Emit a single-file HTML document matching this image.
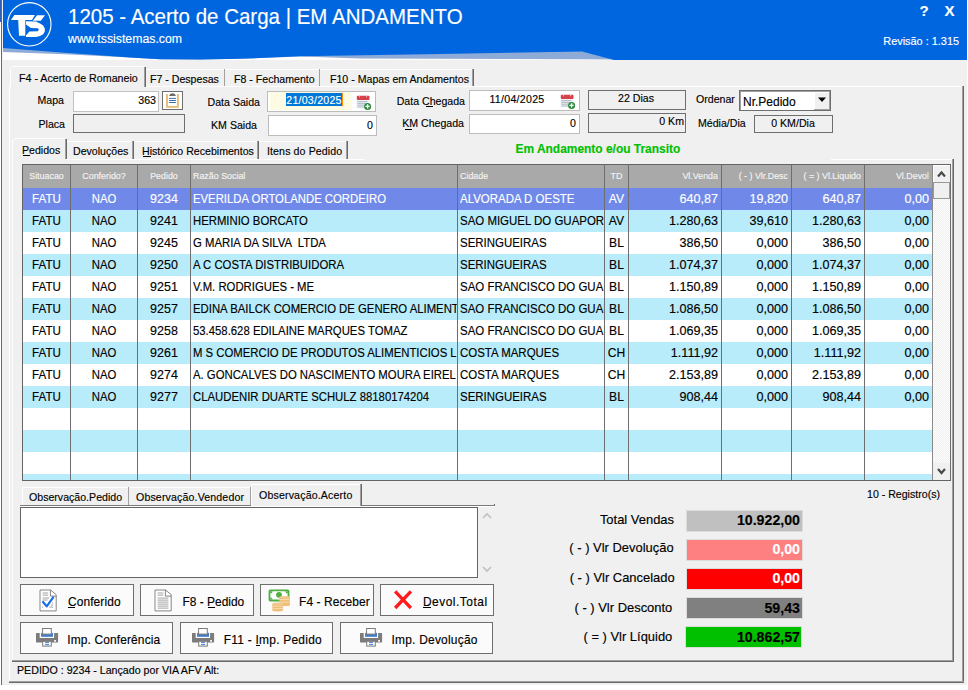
<!DOCTYPE html><html><head><meta charset="utf-8"><style>
html,body{margin:0;padding:0;}
body{width:968px;height:690px;position:relative;overflow:hidden;background:#ffffff;font-family:"Liberation Sans", sans-serif;}
.a{position:absolute;}
.t{position:absolute;white-space:pre;-webkit-text-stroke:0.15px currentColor;}
svg{position:absolute;}
</style></head><body>
<div class="a" style="left:2px;top:0px;width:965px;height:685px;background:#f0f0f0;"></div>
<div class="a" style="left:1px;top:0px;width:1px;height:685px;background:#6a6a6a;"></div>
<div class="a" style="left:0px;top:0px;width:1px;height:22px;background:#2c5fb5;"></div>
<svg class="a" style="left:0;top:0" width="968" height="62" viewBox="0 0 968 62">
<polygon fill="#ffffff" points="3,44 967,44 967,60 3,60"/>
<polygon fill="#8eaad6" points="3,0 614,0 614,59.6 582,59.3 360,58.5 300,56.5 240,58.8 200,59.5 160,59.3 130,57.4 65,54.2 3,52"/>
<polygon fill="#0066e0" points="3,0 967,0 967,60 614,60 582,51.5 440,54 300,56.3 240,58.8 200,59.5 160,59.3 130,57.4 65,52.7 3,48"/>
<polygon fill="#f0f0f0" points="614,60 967,60 967,62 614,62"/>
</svg>
<svg class="a" style="left:0;top:0" width="60" height="50" viewBox="0 0 60 50">
<circle cx="29.3" cy="24.3" r="21.7" fill="none" stroke="#ffffff" stroke-width="1.1"/>
<polygon fill="#ffffff" points="14.3,15 34.9,15 32,19.9 25.3,19.9 25.3,35.8 19,35.8 18.2,19.9 11,19.9"/>
<polygon fill="#ffffff" points="37,15.2 45,15.2 40.8,20.8 32.9,20.8"/>
<polygon fill="#ffffff" points="26,21.2 36,21.5 40,23.5 43.2,25.5 44.8,28.5 44.8,31.5 43.2,34.2 40,36 36,36.9 26,36.9 26,35.5 29.4,31.4 37.8,31.2 38.9,29.5 37.8,28.2 30.9,27.9 26,24.5"/>
</svg>
<div class="t" style="top:6px;font-size:21.58px;line-height:21.58px;color:#ffffff;left:68px;transform:scaleX(0.95);transform-origin:0 0;">1205 - Acerto de Carga | EM ANDAMENTO</div>
<div class="t" style="top:32px;font-size:13.23px;line-height:13.23px;color:#ffffff;left:68px;transform:scaleX(0.93);transform-origin:0 0;">www.tssistemas.com</div>
<div class="t" style="top:3px;font-size:15px;line-height:15px;color:#ffffff;font-weight:bold;left:328.6px;width:600px;text-align:right;">?</div>
<div class="t" style="top:3px;font-size:15px;line-height:15px;color:#ffffff;font-weight:bold;left:354.5px;width:600px;text-align:right;">X</div>
<div class="t" style="top:36px;font-size:11.41px;line-height:11.41px;color:#ffffff;left:358.70000000000005px;width:600px;text-align:right;transform:scaleX(0.955);transform-origin:100% 0;">Revisão : 1.315</div>
<div class="a" style="left:9px;top:86px;width:955px;height:597px;background:#f0f0f0;"></div>
<div class="a" style="left:9px;top:86px;width:955px;height:1px;background:#ffffff;"></div>
<div class="a" style="left:9px;top:86px;width:1px;height:597px;background:#ffffff;"></div>
<div class="a" style="left:962px;top:86px;width:1px;height:597px;background:#a0a0a0;"></div>
<div class="a" style="left:963px;top:86px;width:1px;height:597px;background:#696969;"></div>
<div class="a" style="left:9px;top:681px;width:955px;height:1px;background:#a0a0a0;"></div>
<div class="a" style="left:9px;top:682px;width:955px;height:1px;background:#696969;"></div>
<div class="a" style="left:145px;top:69px;width:80px;height:17px;background:#f0f0f0;"></div>
<div class="a" style="left:145px;top:69px;width:80px;height:1px;background:#ffffff;"></div>
<div class="a" style="left:224px;top:69px;width:1px;height:17px;background:#a0a0a0;"></div>
<div class="a" style="left:225px;top:69px;width:1px;height:17px;background:#696969;"></div>
<div class="a" style="left:225px;top:69px;width:95px;height:17px;background:#f0f0f0;"></div>
<div class="a" style="left:225px;top:69px;width:95px;height:1px;background:#ffffff;"></div>
<div class="a" style="left:319px;top:69px;width:1px;height:17px;background:#a0a0a0;"></div>
<div class="a" style="left:320px;top:69px;width:1px;height:17px;background:#696969;"></div>
<div class="a" style="left:320px;top:69px;width:153px;height:17px;background:#f0f0f0;"></div>
<div class="a" style="left:320px;top:69px;width:153px;height:1px;background:#ffffff;"></div>
<div class="a" style="left:472px;top:69px;width:1px;height:17px;background:#a0a0a0;"></div>
<div class="a" style="left:473px;top:69px;width:1px;height:17px;background:#696969;"></div>
<div class="a" style="left:10px;top:66px;width:135px;height:21px;background:#f0f0f0;"></div>
<div class="a" style="left:12px;top:66px;width:132px;height:1px;background:#ffffff;"></div>
<div class="a" style="left:10px;top:68px;width:1px;height:19px;background:#ffffff;"></div>
<div class="a" style="left:11px;top:67px;width:1px;height:1px;background:#ffffff;"></div>
<div class="a" style="left:144px;top:67px;width:1px;height:20px;background:#a0a0a0;"></div>
<div class="a" style="left:145px;top:67px;width:1px;height:20px;background:#696969;"></div>
<div class="t" style="top:73px;font-size:11.2px;line-height:11.2px;color:#000;left:19px;transform:scaleX(0.955);transform-origin:0 0;">F4 - Acerto de Romaneio</div>
<div class="t" style="top:74px;font-size:11.1px;line-height:11.1px;color:#000;left:150px;transform:scaleX(0.955);transform-origin:0 0;">F7 - Despesas</div>
<div class="t" style="top:74px;font-size:11.1px;line-height:11.1px;color:#000;left:234px;transform:scaleX(0.955);transform-origin:0 0;">F8 - Fechamento</div>
<div class="t" style="top:74px;font-size:11.1px;line-height:11.1px;color:#000;left:329.5px;transform:scaleX(0.955);transform-origin:0 0;">F10 - Mapas em Andamentos</div>
<div class="t" style="top:95px;font-size:11.1px;line-height:11.1px;color:#000;left:-535.9px;width:600px;text-align:right;transform:scaleX(0.955);transform-origin:100% 0;">Mapa</div>
<div class="t" style="top:119px;font-size:11.1px;line-height:11.1px;color:#000;left:-534.9px;width:600px;text-align:right;transform:scaleX(0.955);transform-origin:100% 0;">Placa</div>
<div class="a" style="left:73px;top:91px;width:86px;height:21px;background:#ffffff;border:1px solid #c2c2c2;box-sizing:border-box;"></div>
<div class="t" style="top:95px;font-size:11.1px;line-height:11.1px;color:#000;left:-444.5px;width:600px;text-align:right;transform:scaleX(0.955);transform-origin:100% 0;">363</div>
<div class="a" style="left:162px;top:91px;width:21px;height:19px;background:#ffffff;border:1px solid #6e6e6e;box-sizing:border-box;"></div>
<svg class="a" style="left:160px;top:89px" width="26" height="24" viewBox="0 0 26 24">
<path d="M7 5 V17.9 H17.9 V5" fill="none" stroke="#e8bb70" stroke-width="1.9"/>
<path d="M9 6.9 L10.2 5 Q12.5 3.4 14.8 5 L16 6.9 Z" fill="#6b6b6b"/>
<path d="M9.3 9.4h6.4M9.3 11.5h6.4M9.3 13.5h6.4" stroke="#3c74b8" stroke-width="1" stroke-linecap="round"/>
</svg>
<div class="a" style="left:73px;top:114px;width:112px;height:19px;background:#f0f0f0;border:1px solid #6e6e6e;box-sizing:border-box;"></div>
<div class="t" style="top:97px;font-size:11.1px;line-height:11.1px;color:#000;left:-340px;width:600px;text-align:right;transform:scaleX(0.955);transform-origin:100% 0;">Data Saida</div>
<div class="t" style="top:120px;font-size:11.1px;line-height:11.1px;color:#000;left:-343px;width:600px;text-align:right;transform:scaleX(0.955);transform-origin:100% 0;">KM Saida</div>
<div class="a" style="left:267px;top:91px;width:109px;height:21px;background:#ffffff;border:1px solid #bcbcbc;box-sizing:border-box;"></div>
<div class="a" style="left:270px;top:92px;width:82px;height:18px;background:#fdfbe3;"></div>
<div class="a" style="left:286px;top:93px;width:56px;height:13px;background:#0078d7;"></div>
<div class="a" style="left:342px;top:93px;width:1px;height:13px;background:#ff8c00;"></div>
<div class="t" style="top:95px;font-size:11.1px;line-height:11.1px;color:#ffffff;left:14px;width:600px;text-align:center;transform:scaleX(0.955);transform-origin:50% 0;letter-spacing:0.25px">21/03/2025</div>
<svg class="a" style="left:352px;top:91px" width="24" height="22" viewBox="0 0 24 22">
<rect x="4.8" y="9" width="12" height="8" fill="#f2f4f7"/>
<path d="M5.4 10.6h10M5.4 12.4h10M5.4 14.2h10M5.4 16h10" stroke="#a3b2c0" stroke-width="0.9"/>
<path d="M5.4 9.5v7M8.4 9.5v7M11.4 9.5v7" stroke="#c9d2da" stroke-width="0.6"/>
<rect x="4.8" y="4.8" width="12.7" height="4.2" rx="1" fill="#d7424a"/>
<path d="M7.5 4.8v1.5M14.5 4.8v1.5" stroke="#f3b0b0" stroke-width="1"/>
<circle cx="15.6" cy="15.4" r="3.5" fill="#2c8a3d"/>
<path d="M15.6 13.3v4.2M13.5 15.4h4.2" stroke="#ffffff" stroke-width="1.4"/>
</svg>
<div class="a" style="left:268px;top:115px;width:109px;height:21px;background:#ffffff;border:1px solid #bcbcbc;box-sizing:border-box;"></div>
<div class="t" style="top:120px;font-size:11.1px;line-height:11.1px;color:#000;left:-227px;width:600px;text-align:right;transform:scaleX(0.955);transform-origin:100% 0;">0</div>
<div class="t" style="top:96px;font-size:11.1px;line-height:11.1px;color:#000;left:-135.3px;width:600px;text-align:right;transform:scaleX(0.955);transform-origin:100% 0;">Data Chegada</div>
<div class="a" style="left:425.5px;top:105.5px;width:7px;height:1px;background:#000000;"></div>
<div class="t" style="top:118px;font-size:11.1px;line-height:11.1px;color:#000;left:-136px;width:600px;text-align:right;transform:scaleX(0.955);transform-origin:100% 0;">KM Chegada</div>
<div class="a" style="left:404.5px;top:128.5px;width:7px;height:1px;background:#000000;"></div>
<div class="a" style="left:469px;top:90px;width:111px;height:21px;background:#ffffff;border:1px solid #bcbcbc;box-sizing:border-box;"></div>
<div class="t" style="top:94px;font-size:11.1px;line-height:11.1px;color:#000;left:217px;width:600px;text-align:center;transform:scaleX(0.955);transform-origin:50% 0;letter-spacing:0.3px">11/04/2025</div>
<svg class="a" style="left:556px;top:90px" width="24" height="22" viewBox="0 0 24 22">
<rect x="4.8" y="9" width="12" height="8" fill="#f2f4f7"/>
<path d="M5.4 10.6h10M5.4 12.4h10M5.4 14.2h10M5.4 16h10" stroke="#a3b2c0" stroke-width="0.9"/>
<path d="M5.4 9.5v7M8.4 9.5v7M11.4 9.5v7" stroke="#c9d2da" stroke-width="0.6"/>
<rect x="4.8" y="4.8" width="12.7" height="4.2" rx="1" fill="#d7424a"/>
<path d="M7.5 4.8v1.5M14.5 4.8v1.5" stroke="#f3b0b0" stroke-width="1"/>
<circle cx="15.6" cy="15.4" r="3.5" fill="#2c8a3d"/>
<path d="M15.6 13.3v4.2M13.5 15.4h4.2" stroke="#ffffff" stroke-width="1.4"/>
</svg>
<div class="a" style="left:469px;top:114px;width:111px;height:20px;background:#ffffff;border:1px solid #bcbcbc;box-sizing:border-box;"></div>
<div class="t" style="top:118px;font-size:11.1px;line-height:11.1px;color:#000;left:-24px;width:600px;text-align:right;transform:scaleX(0.955);transform-origin:100% 0;">0</div>
<div class="a" style="left:588px;top:90px;width:98px;height:20px;background:#f0f0f0;border:1px solid #6e6e6e;box-sizing:border-box;"></div>
<div class="t" style="top:93px;font-size:11.1px;line-height:11.1px;color:#000;left:336px;width:600px;text-align:center;transform:scaleX(0.955);transform-origin:50% 0;">22 Dias</div>
<div class="a" style="left:588px;top:113px;width:98px;height:20px;background:#f0f0f0;border:1px solid #6e6e6e;box-sizing:border-box;"></div>
<div class="t" style="top:116px;font-size:11.1px;line-height:11.1px;color:#000;left:84px;width:600px;text-align:right;transform:scaleX(0.955);transform-origin:100% 0;">0 Km</div>
<div class="t" style="top:94px;font-size:11.1px;line-height:11.1px;color:#000;left:695.5px;transform:scaleX(0.955);transform-origin:0 0;">Ordenar</div>
<div class="a" style="left:739px;top:90px;width:92px;height:21px;background:#ffffff;border:1px solid #6e6e6e;box-sizing:border-box;"></div>
<div class="a" style="left:740px;top:91px;width:90px;height:1px;background:#a0a0a0;"></div>
<div class="a" style="left:740px;top:91px;width:1px;height:19px;background:#a0a0a0;"></div>
<div class="t" style="top:96px;font-size:12px;line-height:12px;color:#000;left:743px;">Nr.Pedido</div>
<div class="a" style="left:814px;top:92px;width:16px;height:18px;background:#f0f0f0;"></div>
<div class="a" style="left:814px;top:92px;width:16px;height:1px;background:#ffffff;"></div>
<div class="a" style="left:814px;top:92px;width:1px;height:18px;background:#ffffff;"></div>
<div class="a" style="left:829px;top:92px;width:1px;height:18px;background:#a0a0a0;"></div>
<div class="a" style="left:814px;top:109px;width:16px;height:1px;background:#a0a0a0;"></div>
<svg class="a" style="left:817px;top:97px" width="10" height="6" viewBox="0 0 10 6"><polygon points="1,0.5 9,0.5 5,5" fill="#000"/></svg>
<div class="t" style="top:118px;font-size:11.1px;line-height:11.1px;color:#000;left:698.4px;transform:scaleX(0.955);transform-origin:0 0;">Média/Dia</div>
<div class="a" style="left:754px;top:115px;width:79px;height:18px;background:#f0f0f0;border:1px solid #6e6e6e;box-sizing:border-box;"></div>
<div class="t" style="top:118px;font-size:11.1px;line-height:11.1px;color:#000;left:493px;width:600px;text-align:center;transform:scaleX(0.955);transform-origin:50% 0;">0 KM/Dia</div>
<div class="a" style="left:12px;top:159px;width:942px;height:503px;background:#f0f0f0;"></div>
<div class="a" style="left:12px;top:159px;width:941px;height:1px;background:#ffffff;"></div>
<div class="a" style="left:364px;top:159px;width:467px;height:1px;background:#f0f0f0;"></div>
<div class="a" style="left:12px;top:159px;width:1px;height:502px;background:#ffffff;"></div>
<div class="a" style="left:952px;top:159px;width:1px;height:502px;background:#a0a0a0;"></div>
<div class="a" style="left:953px;top:159px;width:1px;height:502px;background:#696969;"></div>
<div class="a" style="left:12px;top:660px;width:941px;height:1px;background:#a0a0a0;"></div>
<div class="a" style="left:12px;top:661px;width:942px;height:1px;background:#696969;"></div>
<div class="a" style="left:67px;top:141px;width:67px;height:18px;background:#f0f0f0;"></div>
<div class="a" style="left:67px;top:141px;width:67px;height:1px;background:#ffffff;"></div>
<div class="a" style="left:132px;top:141px;width:1px;height:18px;background:#a0a0a0;"></div>
<div class="a" style="left:133px;top:141px;width:1px;height:18px;background:#696969;"></div>
<div class="a" style="left:134px;top:141px;width:125px;height:18px;background:#f0f0f0;"></div>
<div class="a" style="left:134px;top:141px;width:125px;height:1px;background:#ffffff;"></div>
<div class="a" style="left:257px;top:141px;width:1px;height:18px;background:#a0a0a0;"></div>
<div class="a" style="left:258px;top:141px;width:1px;height:18px;background:#696969;"></div>
<div class="a" style="left:259px;top:141px;width:89px;height:18px;background:#f0f0f0;"></div>
<div class="a" style="left:259px;top:141px;width:89px;height:1px;background:#ffffff;"></div>
<div class="a" style="left:346px;top:141px;width:1px;height:18px;background:#a0a0a0;"></div>
<div class="a" style="left:347px;top:141px;width:1px;height:18px;background:#696969;"></div>
<div class="a" style="left:13px;top:138px;width:53px;height:22px;background:#f0f0f0;"></div>
<div class="a" style="left:15px;top:138px;width:50px;height:1px;background:#ffffff;"></div>
<div class="a" style="left:12px;top:140px;width:1px;height:20px;background:#ffffff;"></div>
<div class="a" style="left:13px;top:139px;width:1px;height:1px;background:#ffffff;"></div>
<div class="a" style="left:65px;top:139px;width:1px;height:20px;background:#a0a0a0;"></div>
<div class="a" style="left:66px;top:139px;width:1px;height:20px;background:#696969;"></div>
<div class="t" style="top:145px;font-size:11.1px;line-height:11.1px;color:#000;left:22.2px;transform:scaleX(0.955);transform-origin:0 0;">Pedidos</div>
<div class="a" style="left:22.5px;top:155px;width:7px;height:1px;background:#000;"></div>
<div class="t" style="top:146px;font-size:11.1px;line-height:11.1px;color:#000;left:73.3px;transform:scaleX(0.955);transform-origin:0 0;">Devoluções</div>
<div class="t" style="top:146px;font-size:11.1px;line-height:11.1px;color:#000;left:142px;transform:scaleX(0.955);transform-origin:0 0;">Histórico Recebimentos</div>
<div class="a" style="left:142.5px;top:156px;width:8px;height:1px;background:#000;"></div>
<div class="t" style="top:146px;font-size:11.1px;line-height:11.1px;color:#000;left:267px;transform:scaleX(0.955);transform-origin:0 0;letter-spacing:0.12px">Itens do Pedido</div>
<div class="t" style="top:144px;font-size:11.95px;line-height:11.95px;color:#00c000;font-weight:bold;left:515.5px;">Em Andamento e/ou Transito</div>
<div class="a" style="left:22px;top:164px;width:929px;height:317px;background:#ffffff;border:1px solid #646464;box-sizing:border-box;"></div>
<div class="a" style="left:23px;top:165px;width:909px;height:23px;background:#a9a9a9;"></div>
<div class="a" style="left:23px;top:188px;width:909px;height:22px;background:#7089e8;"></div>
<div class="a" style="left:23px;top:210px;width:909px;height:22px;background:#b9ecfb;"></div>
<div class="a" style="left:23px;top:232px;width:909px;height:22px;background:#ffffff;"></div>
<div class="a" style="left:23px;top:254px;width:909px;height:22px;background:#b9ecfb;"></div>
<div class="a" style="left:23px;top:276px;width:909px;height:22px;background:#ffffff;"></div>
<div class="a" style="left:23px;top:298px;width:909px;height:22px;background:#b9ecfb;"></div>
<div class="a" style="left:23px;top:320px;width:909px;height:22px;background:#ffffff;"></div>
<div class="a" style="left:23px;top:342px;width:909px;height:22px;background:#b9ecfb;"></div>
<div class="a" style="left:23px;top:364px;width:909px;height:22px;background:#ffffff;"></div>
<div class="a" style="left:23px;top:386px;width:909px;height:22px;background:#b9ecfb;"></div>
<div class="a" style="left:23px;top:408px;width:909px;height:22px;background:#ffffff;"></div>
<div class="a" style="left:23px;top:430px;width:909px;height:22px;background:#b9ecfb;"></div>
<div class="a" style="left:23px;top:452px;width:909px;height:22px;background:#ffffff;"></div>
<div class="a" style="left:23px;top:474px;width:909px;height:6px;background:#b9ecfb;"></div>
<div class="a" style="left:70px;top:165px;width:1px;height:315px;background:#6e6e6e;"></div>
<div class="a" style="left:137px;top:165px;width:1px;height:315px;background:#6e6e6e;"></div>
<div class="a" style="left:190px;top:165px;width:1px;height:315px;background:#6e6e6e;"></div>
<div class="a" style="left:457px;top:165px;width:1px;height:315px;background:#6e6e6e;"></div>
<div class="a" style="left:604px;top:165px;width:1px;height:315px;background:#6e6e6e;"></div>
<div class="a" style="left:628px;top:165px;width:1px;height:315px;background:#6e6e6e;"></div>
<div class="a" style="left:721px;top:165px;width:1px;height:315px;background:#6e6e6e;"></div>
<div class="a" style="left:791px;top:165px;width:1px;height:315px;background:#6e6e6e;"></div>
<div class="a" style="left:864px;top:165px;width:1px;height:315px;background:#6e6e6e;"></div>
<div class="t" style="left:23px;width:49.47px;text-align:center;transform:scaleX(0.95);transform-origin:0 0;top:172px;font-size:9.35px;line-height:9.35px;color:#f4f4f4;overflow:hidden;">Situacao</div>
<div class="t" style="left:71px;width:69.47px;text-align:center;transform:scaleX(0.95);transform-origin:0 0;top:172px;font-size:9.35px;line-height:9.35px;color:#f4f4f4;overflow:hidden;">Conferido?</div>
<div class="t" style="left:138px;width:54.74px;text-align:center;transform:scaleX(0.95);transform-origin:0 0;top:172px;font-size:9.35px;line-height:9.35px;color:#f4f4f4;overflow:hidden;">Pedido</div>
<div class="t" style="left:193px;width:277.89px;text-align:left;transform:scaleX(0.95);transform-origin:0 0;top:172px;font-size:9.35px;line-height:9.35px;color:#f4f4f4;overflow:hidden;">Razão Social</div>
<div class="t" style="left:460px;width:151.58px;text-align:left;transform:scaleX(0.95);transform-origin:0 0;top:172px;font-size:9.35px;line-height:9.35px;color:#f4f4f4;overflow:hidden;">Cidade</div>
<div class="t" style="left:605px;width:24.21px;text-align:center;transform:scaleX(0.95);transform-origin:0 0;top:172px;font-size:9.35px;line-height:9.35px;color:#f4f4f4;overflow:hidden;">TD</div>
<div class="t" style="left:629px;width:93.68px;text-align:right;transform:scaleX(0.95);transform-origin:0 0;top:172px;font-size:9.35px;line-height:9.35px;color:#f4f4f4;overflow:hidden;">Vl.Venda</div>
<div class="t" style="left:722px;width:69.47px;text-align:right;transform:scaleX(0.95);transform-origin:0 0;top:172px;font-size:9.35px;line-height:9.35px;color:#f4f4f4;overflow:hidden;">( - ) Vlr.Desc</div>
<div class="t" style="left:792px;width:72.63px;text-align:right;transform:scaleX(0.95);transform-origin:0 0;top:172px;font-size:9.35px;line-height:9.35px;color:#f4f4f4;overflow:hidden;">( = ) Vl.Liquido</div>
<div class="t" style="left:865px;width:67.37px;text-align:right;transform:scaleX(0.95);transform-origin:0 0;top:172px;font-size:9.35px;line-height:9.35px;color:#f4f4f4;overflow:hidden;">Vl.Devol</div>
<div class="t" style="left:23px;width:51.09px;text-align:center;transform:scaleX(0.92);transform-origin:0 0;top:193px;font-size:12.6px;line-height:12.6px;color:#ffffff;overflow:hidden;">FATU</div>
<div class="t" style="left:71px;width:73.33px;text-align:center;transform:scaleX(0.9);transform-origin:0 0;top:193px;font-size:12.6px;line-height:12.6px;color:#ffffff;overflow:hidden;">NAO</div>
<div class="t" style="left:138px;width:52.53px;text-align:center;transform:scaleX(0.99);transform-origin:0 0;top:193px;font-size:12.6px;line-height:12.6px;color:#ffffff;overflow:hidden;">9234</div>
<div class="t" style="left:193px;width:293.33px;text-align:left;transform:scaleX(0.9);transform-origin:0 0;top:193px;font-size:12.6px;line-height:12.6px;color:#ffffff;overflow:hidden;">EVERILDA ORTOLANDE CORDEIRO</div>
<div class="t" style="left:460px;width:158.24px;text-align:left;transform:scaleX(0.91);transform-origin:0 0;top:193px;font-size:12.6px;line-height:12.6px;color:#ffffff;overflow:hidden;">ALVORADA D OESTE</div>
<div class="t" style="left:605px;width:23.96px;text-align:center;transform:scaleX(0.96);transform-origin:0 0;top:193px;font-size:12.6px;line-height:12.6px;color:#ffffff;overflow:hidden;">AV</div>
<div class="t" style="left:629px;width:89.00px;text-align:right;top:193px;font-size:12.6px;line-height:12.6px;color:#ffffff;overflow:hidden;">640,87</div>
<div class="t" style="left:722px;width:66.00px;text-align:right;top:193px;font-size:12.6px;line-height:12.6px;color:#ffffff;overflow:hidden;">19,820</div>
<div class="t" style="left:792px;width:69.00px;text-align:right;top:193px;font-size:12.6px;line-height:12.6px;color:#ffffff;overflow:hidden;">640,87</div>
<div class="t" style="left:865px;width:64.00px;text-align:right;top:193px;font-size:12.6px;line-height:12.6px;color:#ffffff;overflow:hidden;">0,00</div>
<div class="t" style="left:23px;width:51.09px;text-align:center;transform:scaleX(0.92);transform-origin:0 0;top:215px;font-size:12.6px;line-height:12.6px;color:#000000;overflow:hidden;">FATU</div>
<div class="t" style="left:71px;width:73.33px;text-align:center;transform:scaleX(0.9);transform-origin:0 0;top:215px;font-size:12.6px;line-height:12.6px;color:#000000;overflow:hidden;">NAO</div>
<div class="t" style="left:138px;width:52.53px;text-align:center;transform:scaleX(0.99);transform-origin:0 0;top:215px;font-size:12.6px;line-height:12.6px;color:#000000;overflow:hidden;">9241</div>
<div class="t" style="left:193px;width:293.33px;text-align:left;transform:scaleX(0.9);transform-origin:0 0;top:215px;font-size:12.6px;line-height:12.6px;color:#000000;overflow:hidden;">HERMINIO BORCATO</div>
<div class="t" style="left:460px;width:158.24px;text-align:left;transform:scaleX(0.91);transform-origin:0 0;top:215px;font-size:12.6px;line-height:12.6px;color:#000000;overflow:hidden;">SAO MIGUEL DO GUAPOR</div>
<div class="t" style="left:605px;width:23.96px;text-align:center;transform:scaleX(0.96);transform-origin:0 0;top:215px;font-size:12.6px;line-height:12.6px;color:#000000;overflow:hidden;">AV</div>
<div class="t" style="left:629px;width:89.00px;text-align:right;top:215px;font-size:12.6px;line-height:12.6px;color:#000000;overflow:hidden;">1.280,63</div>
<div class="t" style="left:722px;width:66.00px;text-align:right;top:215px;font-size:12.6px;line-height:12.6px;color:#000000;overflow:hidden;">39,610</div>
<div class="t" style="left:792px;width:69.00px;text-align:right;top:215px;font-size:12.6px;line-height:12.6px;color:#000000;overflow:hidden;">1.280,63</div>
<div class="t" style="left:865px;width:64.00px;text-align:right;top:215px;font-size:12.6px;line-height:12.6px;color:#000000;overflow:hidden;">0,00</div>
<div class="t" style="left:23px;width:51.09px;text-align:center;transform:scaleX(0.92);transform-origin:0 0;top:237px;font-size:12.6px;line-height:12.6px;color:#000000;overflow:hidden;">FATU</div>
<div class="t" style="left:71px;width:73.33px;text-align:center;transform:scaleX(0.9);transform-origin:0 0;top:237px;font-size:12.6px;line-height:12.6px;color:#000000;overflow:hidden;">NAO</div>
<div class="t" style="left:138px;width:52.53px;text-align:center;transform:scaleX(0.99);transform-origin:0 0;top:237px;font-size:12.6px;line-height:12.6px;color:#000000;overflow:hidden;">9245</div>
<div class="t" style="left:193px;width:293.33px;text-align:left;transform:scaleX(0.9);transform-origin:0 0;top:237px;font-size:12.6px;line-height:12.6px;color:#000000;overflow:hidden;">G MARIA DA SILVA  LTDA</div>
<div class="t" style="left:460px;width:158.24px;text-align:left;transform:scaleX(0.91);transform-origin:0 0;top:237px;font-size:12.6px;line-height:12.6px;color:#000000;overflow:hidden;">SERINGUEIRAS</div>
<div class="t" style="left:605px;width:23.96px;text-align:center;transform:scaleX(0.96);transform-origin:0 0;top:237px;font-size:12.6px;line-height:12.6px;color:#000000;overflow:hidden;">BL</div>
<div class="t" style="left:629px;width:89.00px;text-align:right;top:237px;font-size:12.6px;line-height:12.6px;color:#000000;overflow:hidden;">386,50</div>
<div class="t" style="left:722px;width:66.00px;text-align:right;top:237px;font-size:12.6px;line-height:12.6px;color:#000000;overflow:hidden;">0,000</div>
<div class="t" style="left:792px;width:69.00px;text-align:right;top:237px;font-size:12.6px;line-height:12.6px;color:#000000;overflow:hidden;">386,50</div>
<div class="t" style="left:865px;width:64.00px;text-align:right;top:237px;font-size:12.6px;line-height:12.6px;color:#000000;overflow:hidden;">0,00</div>
<div class="t" style="left:23px;width:51.09px;text-align:center;transform:scaleX(0.92);transform-origin:0 0;top:259px;font-size:12.6px;line-height:12.6px;color:#000000;overflow:hidden;">FATU</div>
<div class="t" style="left:71px;width:73.33px;text-align:center;transform:scaleX(0.9);transform-origin:0 0;top:259px;font-size:12.6px;line-height:12.6px;color:#000000;overflow:hidden;">NAO</div>
<div class="t" style="left:138px;width:52.53px;text-align:center;transform:scaleX(0.99);transform-origin:0 0;top:259px;font-size:12.6px;line-height:12.6px;color:#000000;overflow:hidden;">9250</div>
<div class="t" style="left:193px;width:293.33px;text-align:left;transform:scaleX(0.9);transform-origin:0 0;top:259px;font-size:12.6px;line-height:12.6px;color:#000000;overflow:hidden;">A C COSTA DISTRIBUIDORA</div>
<div class="t" style="left:460px;width:158.24px;text-align:left;transform:scaleX(0.91);transform-origin:0 0;top:259px;font-size:12.6px;line-height:12.6px;color:#000000;overflow:hidden;">SERINGUEIRAS</div>
<div class="t" style="left:605px;width:23.96px;text-align:center;transform:scaleX(0.96);transform-origin:0 0;top:259px;font-size:12.6px;line-height:12.6px;color:#000000;overflow:hidden;">BL</div>
<div class="t" style="left:629px;width:89.00px;text-align:right;top:259px;font-size:12.6px;line-height:12.6px;color:#000000;overflow:hidden;">1.074,37</div>
<div class="t" style="left:722px;width:66.00px;text-align:right;top:259px;font-size:12.6px;line-height:12.6px;color:#000000;overflow:hidden;">0,000</div>
<div class="t" style="left:792px;width:69.00px;text-align:right;top:259px;font-size:12.6px;line-height:12.6px;color:#000000;overflow:hidden;">1.074,37</div>
<div class="t" style="left:865px;width:64.00px;text-align:right;top:259px;font-size:12.6px;line-height:12.6px;color:#000000;overflow:hidden;">0,00</div>
<div class="t" style="left:23px;width:51.09px;text-align:center;transform:scaleX(0.92);transform-origin:0 0;top:281px;font-size:12.6px;line-height:12.6px;color:#000000;overflow:hidden;">FATU</div>
<div class="t" style="left:71px;width:73.33px;text-align:center;transform:scaleX(0.9);transform-origin:0 0;top:281px;font-size:12.6px;line-height:12.6px;color:#000000;overflow:hidden;">NAO</div>
<div class="t" style="left:138px;width:52.53px;text-align:center;transform:scaleX(0.99);transform-origin:0 0;top:281px;font-size:12.6px;line-height:12.6px;color:#000000;overflow:hidden;">9251</div>
<div class="t" style="left:193px;width:293.33px;text-align:left;transform:scaleX(0.9);transform-origin:0 0;top:281px;font-size:12.6px;line-height:12.6px;color:#000000;overflow:hidden;">V.M. RODRIGUES - ME</div>
<div class="t" style="left:460px;width:158.24px;text-align:left;transform:scaleX(0.91);transform-origin:0 0;top:281px;font-size:12.6px;line-height:12.6px;color:#000000;overflow:hidden;">SAO FRANCISCO DO GUAI</div>
<div class="t" style="left:605px;width:23.96px;text-align:center;transform:scaleX(0.96);transform-origin:0 0;top:281px;font-size:12.6px;line-height:12.6px;color:#000000;overflow:hidden;">BL</div>
<div class="t" style="left:629px;width:89.00px;text-align:right;top:281px;font-size:12.6px;line-height:12.6px;color:#000000;overflow:hidden;">1.150,89</div>
<div class="t" style="left:722px;width:66.00px;text-align:right;top:281px;font-size:12.6px;line-height:12.6px;color:#000000;overflow:hidden;">0,000</div>
<div class="t" style="left:792px;width:69.00px;text-align:right;top:281px;font-size:12.6px;line-height:12.6px;color:#000000;overflow:hidden;">1.150,89</div>
<div class="t" style="left:865px;width:64.00px;text-align:right;top:281px;font-size:12.6px;line-height:12.6px;color:#000000;overflow:hidden;">0,00</div>
<div class="t" style="left:23px;width:51.09px;text-align:center;transform:scaleX(0.92);transform-origin:0 0;top:303px;font-size:12.6px;line-height:12.6px;color:#000000;overflow:hidden;">FATU</div>
<div class="t" style="left:71px;width:73.33px;text-align:center;transform:scaleX(0.9);transform-origin:0 0;top:303px;font-size:12.6px;line-height:12.6px;color:#000000;overflow:hidden;">NAO</div>
<div class="t" style="left:138px;width:52.53px;text-align:center;transform:scaleX(0.99);transform-origin:0 0;top:303px;font-size:12.6px;line-height:12.6px;color:#000000;overflow:hidden;">9257</div>
<div class="t" style="left:193px;width:293.33px;text-align:left;transform:scaleX(0.9);transform-origin:0 0;top:303px;font-size:12.6px;line-height:12.6px;color:#000000;overflow:hidden;">EDINA BAILCK COMERCIO DE GENERO ALIMENT</div>
<div class="t" style="left:460px;width:158.24px;text-align:left;transform:scaleX(0.91);transform-origin:0 0;top:303px;font-size:12.6px;line-height:12.6px;color:#000000;overflow:hidden;">SAO FRANCISCO DO GUAI</div>
<div class="t" style="left:605px;width:23.96px;text-align:center;transform:scaleX(0.96);transform-origin:0 0;top:303px;font-size:12.6px;line-height:12.6px;color:#000000;overflow:hidden;">BL</div>
<div class="t" style="left:629px;width:89.00px;text-align:right;top:303px;font-size:12.6px;line-height:12.6px;color:#000000;overflow:hidden;">1.086,50</div>
<div class="t" style="left:722px;width:66.00px;text-align:right;top:303px;font-size:12.6px;line-height:12.6px;color:#000000;overflow:hidden;">0,000</div>
<div class="t" style="left:792px;width:69.00px;text-align:right;top:303px;font-size:12.6px;line-height:12.6px;color:#000000;overflow:hidden;">1.086,50</div>
<div class="t" style="left:865px;width:64.00px;text-align:right;top:303px;font-size:12.6px;line-height:12.6px;color:#000000;overflow:hidden;">0,00</div>
<div class="t" style="left:23px;width:51.09px;text-align:center;transform:scaleX(0.92);transform-origin:0 0;top:325px;font-size:12.6px;line-height:12.6px;color:#000000;overflow:hidden;">FATU</div>
<div class="t" style="left:71px;width:73.33px;text-align:center;transform:scaleX(0.9);transform-origin:0 0;top:325px;font-size:12.6px;line-height:12.6px;color:#000000;overflow:hidden;">NAO</div>
<div class="t" style="left:138px;width:52.53px;text-align:center;transform:scaleX(0.99);transform-origin:0 0;top:325px;font-size:12.6px;line-height:12.6px;color:#000000;overflow:hidden;">9258</div>
<div class="t" style="left:193px;width:293.33px;text-align:left;transform:scaleX(0.9);transform-origin:0 0;top:325px;font-size:12.6px;line-height:12.6px;color:#000000;overflow:hidden;">53.458.628 EDILAINE MARQUES TOMAZ</div>
<div class="t" style="left:460px;width:158.24px;text-align:left;transform:scaleX(0.91);transform-origin:0 0;top:325px;font-size:12.6px;line-height:12.6px;color:#000000;overflow:hidden;">SAO FRANCISCO DO GUAI</div>
<div class="t" style="left:605px;width:23.96px;text-align:center;transform:scaleX(0.96);transform-origin:0 0;top:325px;font-size:12.6px;line-height:12.6px;color:#000000;overflow:hidden;">BL</div>
<div class="t" style="left:629px;width:89.00px;text-align:right;top:325px;font-size:12.6px;line-height:12.6px;color:#000000;overflow:hidden;">1.069,35</div>
<div class="t" style="left:722px;width:66.00px;text-align:right;top:325px;font-size:12.6px;line-height:12.6px;color:#000000;overflow:hidden;">0,000</div>
<div class="t" style="left:792px;width:69.00px;text-align:right;top:325px;font-size:12.6px;line-height:12.6px;color:#000000;overflow:hidden;">1.069,35</div>
<div class="t" style="left:865px;width:64.00px;text-align:right;top:325px;font-size:12.6px;line-height:12.6px;color:#000000;overflow:hidden;">0,00</div>
<div class="t" style="left:23px;width:51.09px;text-align:center;transform:scaleX(0.92);transform-origin:0 0;top:347px;font-size:12.6px;line-height:12.6px;color:#000000;overflow:hidden;">FATU</div>
<div class="t" style="left:71px;width:73.33px;text-align:center;transform:scaleX(0.9);transform-origin:0 0;top:347px;font-size:12.6px;line-height:12.6px;color:#000000;overflow:hidden;">NAO</div>
<div class="t" style="left:138px;width:52.53px;text-align:center;transform:scaleX(0.99);transform-origin:0 0;top:347px;font-size:12.6px;line-height:12.6px;color:#000000;overflow:hidden;">9261</div>
<div class="t" style="left:193px;width:293.33px;text-align:left;transform:scaleX(0.9);transform-origin:0 0;top:347px;font-size:12.6px;line-height:12.6px;color:#000000;overflow:hidden;">M S COMERCIO DE PRODUTOS ALIMENTICIOS L</div>
<div class="t" style="left:460px;width:158.24px;text-align:left;transform:scaleX(0.91);transform-origin:0 0;top:347px;font-size:12.6px;line-height:12.6px;color:#000000;overflow:hidden;">COSTA MARQUES</div>
<div class="t" style="left:605px;width:23.96px;text-align:center;transform:scaleX(0.96);transform-origin:0 0;top:347px;font-size:12.6px;line-height:12.6px;color:#000000;overflow:hidden;">CH</div>
<div class="t" style="left:629px;width:89.00px;text-align:right;top:347px;font-size:12.6px;line-height:12.6px;color:#000000;overflow:hidden;">1.111,92</div>
<div class="t" style="left:722px;width:66.00px;text-align:right;top:347px;font-size:12.6px;line-height:12.6px;color:#000000;overflow:hidden;">0,000</div>
<div class="t" style="left:792px;width:69.00px;text-align:right;top:347px;font-size:12.6px;line-height:12.6px;color:#000000;overflow:hidden;">1.111,92</div>
<div class="t" style="left:865px;width:64.00px;text-align:right;top:347px;font-size:12.6px;line-height:12.6px;color:#000000;overflow:hidden;">0,00</div>
<div class="t" style="left:23px;width:51.09px;text-align:center;transform:scaleX(0.92);transform-origin:0 0;top:369px;font-size:12.6px;line-height:12.6px;color:#000000;overflow:hidden;">FATU</div>
<div class="t" style="left:71px;width:73.33px;text-align:center;transform:scaleX(0.9);transform-origin:0 0;top:369px;font-size:12.6px;line-height:12.6px;color:#000000;overflow:hidden;">NAO</div>
<div class="t" style="left:138px;width:52.53px;text-align:center;transform:scaleX(0.99);transform-origin:0 0;top:369px;font-size:12.6px;line-height:12.6px;color:#000000;overflow:hidden;">9274</div>
<div class="t" style="left:193px;width:293.33px;text-align:left;transform:scaleX(0.9);transform-origin:0 0;top:369px;font-size:12.6px;line-height:12.6px;color:#000000;overflow:hidden;">A. GONCALVES DO NASCIMENTO MOURA EIREL</div>
<div class="t" style="left:460px;width:158.24px;text-align:left;transform:scaleX(0.91);transform-origin:0 0;top:369px;font-size:12.6px;line-height:12.6px;color:#000000;overflow:hidden;">COSTA MARQUES</div>
<div class="t" style="left:605px;width:23.96px;text-align:center;transform:scaleX(0.96);transform-origin:0 0;top:369px;font-size:12.6px;line-height:12.6px;color:#000000;overflow:hidden;">CH</div>
<div class="t" style="left:629px;width:89.00px;text-align:right;top:369px;font-size:12.6px;line-height:12.6px;color:#000000;overflow:hidden;">2.153,89</div>
<div class="t" style="left:722px;width:66.00px;text-align:right;top:369px;font-size:12.6px;line-height:12.6px;color:#000000;overflow:hidden;">0,000</div>
<div class="t" style="left:792px;width:69.00px;text-align:right;top:369px;font-size:12.6px;line-height:12.6px;color:#000000;overflow:hidden;">2.153,89</div>
<div class="t" style="left:865px;width:64.00px;text-align:right;top:369px;font-size:12.6px;line-height:12.6px;color:#000000;overflow:hidden;">0,00</div>
<div class="t" style="left:23px;width:51.09px;text-align:center;transform:scaleX(0.92);transform-origin:0 0;top:391px;font-size:12.6px;line-height:12.6px;color:#000000;overflow:hidden;">FATU</div>
<div class="t" style="left:71px;width:73.33px;text-align:center;transform:scaleX(0.9);transform-origin:0 0;top:391px;font-size:12.6px;line-height:12.6px;color:#000000;overflow:hidden;">NAO</div>
<div class="t" style="left:138px;width:52.53px;text-align:center;transform:scaleX(0.99);transform-origin:0 0;top:391px;font-size:12.6px;line-height:12.6px;color:#000000;overflow:hidden;">9277</div>
<div class="t" style="left:193px;width:293.33px;text-align:left;transform:scaleX(0.9);transform-origin:0 0;top:391px;font-size:12.6px;line-height:12.6px;color:#000000;overflow:hidden;">CLAUDENIR DUARTE SCHULZ 88180174204</div>
<div class="t" style="left:460px;width:158.24px;text-align:left;transform:scaleX(0.91);transform-origin:0 0;top:391px;font-size:12.6px;line-height:12.6px;color:#000000;overflow:hidden;">SERINGUEIRAS</div>
<div class="t" style="left:605px;width:23.96px;text-align:center;transform:scaleX(0.96);transform-origin:0 0;top:391px;font-size:12.6px;line-height:12.6px;color:#000000;overflow:hidden;">BL</div>
<div class="t" style="left:629px;width:89.00px;text-align:right;top:391px;font-size:12.6px;line-height:12.6px;color:#000000;overflow:hidden;">908,44</div>
<div class="t" style="left:722px;width:66.00px;text-align:right;top:391px;font-size:12.6px;line-height:12.6px;color:#000000;overflow:hidden;">0,000</div>
<div class="t" style="left:792px;width:69.00px;text-align:right;top:391px;font-size:12.6px;line-height:12.6px;color:#000000;overflow:hidden;">908,44</div>
<div class="t" style="left:865px;width:64.00px;text-align:right;top:391px;font-size:12.6px;line-height:12.6px;color:#000000;overflow:hidden;">0,00</div>
<div class="a" style="left:932px;top:165px;width:1px;height:315px;background:#8a8a8a;"></div>
<div class="a" style="left:933px;top:165px;width:17px;height:315px;background:repeating-conic-gradient(#eeeeee 0 25%, #ffffff 0 50%) 0 0/2px 2px;"></div>
<div class="a" style="left:950px;top:165px;width:1px;height:315px;background:#6e6e6e;"></div>
<div class="a" style="left:933px;top:165px;width:17px;height:17px;background:#f0f0f0;border-top:1px solid #fff;border-left:1px solid #fff;box-sizing:border-box;"></div>
<svg class="a" style="left:936px;top:169px" width="12" height="10" viewBox="0 0 12 10"><path d="M2 7.5 L5.5 3.5 L9 7.5" fill="none" stroke="#4a4a4a" stroke-width="2.2"/></svg>
<div class="a" style="left:933px;top:182px;width:17px;height:17px;background:#f0f0f0;border:1px solid #9a9a9a;box-sizing:border-box;"></div>
<div class="a" style="left:933px;top:463px;width:17px;height:17px;background:#f0f0f0;"></div>
<svg class="a" style="left:936px;top:466px" width="12" height="10" viewBox="0 0 12 10"><path d="M2 3 L5.5 7 L9 3" fill="none" stroke="#4a4a4a" stroke-width="2.2"/></svg>
<div class="t" style="top:489px;font-size:11.1px;line-height:11.1px;color:#000;left:340px;width:600px;text-align:right;transform:scaleX(0.955);transform-origin:100% 0;">10 - Registro(s)</div>
<div class="a" style="left:20px;top:505px;width:475px;height:1px;background:#7a7a7a;"></div>
<div class="a" style="left:494px;top:504px;width:1px;height:2px;background:#6e6e6e;"></div>
<div class="a" style="left:20px;top:506px;width:475px;height:1px;background:#ffffff;"></div>
<div class="a" style="left:22px;top:487px;width:107px;height:18px;background:#f0f0f0;"></div>
<div class="a" style="left:22px;top:487px;width:107px;height:1px;background:#ffffff;"></div>
<div class="a" style="left:128px;top:487px;width:1px;height:18px;background:#a0a0a0;"></div>
<div class="a" style="left:129px;top:487px;width:1px;height:18px;background:#696969;"></div>
<div class="a" style="left:129px;top:487px;width:122px;height:18px;background:#f0f0f0;"></div>
<div class="a" style="left:129px;top:487px;width:122px;height:1px;background:#ffffff;"></div>
<div class="a" style="left:250px;top:487px;width:1px;height:18px;background:#a0a0a0;"></div>
<div class="a" style="left:251px;top:487px;width:1px;height:18px;background:#696969;"></div>
<div class="a" style="left:22px;top:488px;width:1px;height:17px;background:#ffffff;"></div>
<div class="a" style="left:251px;top:484px;width:110px;height:22px;background:#f0f0f0;"></div>
<div class="a" style="left:251px;top:484px;width:110px;height:1px;background:#ffffff;"></div>
<div class="a" style="left:251px;top:484px;width:1px;height:22px;background:#ffffff;"></div>
<div class="a" style="left:360px;top:484px;width:1px;height:22px;background:#a0a0a0;"></div>
<div class="a" style="left:361px;top:484px;width:1px;height:22px;background:#696969;"></div>
<div class="t" style="top:492px;font-size:11.1px;line-height:11.1px;color:#000;left:29px;transform:scaleX(0.955);transform-origin:0 0;">Observação.Pedido</div>
<div class="t" style="top:492px;font-size:11.1px;line-height:11.1px;color:#000;left:136.4px;transform:scaleX(0.955);transform-origin:0 0;letter-spacing:0.15px">Observação.Vendedor</div>
<div class="t" style="top:490px;font-size:11.1px;line-height:11.1px;color:#000;left:258.6px;transform:scaleX(0.955);transform-origin:0 0;letter-spacing:0.17px">Observação.Acerto</div>
<div class="a" style="left:20px;top:507px;width:458px;height:71px;background:#ffffff;border:1px solid #646464;box-sizing:border-box;"></div>
<svg class="a" style="left:482px;top:512px" width="10" height="7" viewBox="0 0 10 7"><path d="M1 6 L5 2 L9 6" fill="none" stroke="#c0c0c0" stroke-width="1.6"/></svg>
<svg class="a" style="left:482px;top:566px" width="10" height="7" viewBox="0 0 10 7"><path d="M1 1 L5 5 L9 1" fill="none" stroke="#c0c0c0" stroke-width="1.6"/></svg>
<div class="a" style="left:20px;top:584px;width:114px;height:32px;background:#fbfbfb;border:1px solid #6e6e6e;box-sizing:border-box;"></div>
<div class="a" style="left:140px;top:584px;width:114px;height:32px;background:#fbfbfb;border:1px solid #6e6e6e;box-sizing:border-box;"></div>
<div class="a" style="left:260px;top:584px;width:114px;height:32px;background:#fbfbfb;border:1px solid #6e6e6e;box-sizing:border-box;"></div>
<div class="a" style="left:380px;top:584px;width:114px;height:32px;background:#fbfbfb;border:1px solid #6e6e6e;box-sizing:border-box;"></div>
<div class="a" style="left:20px;top:622px;width:153px;height:32px;background:#fbfbfb;border:1px solid #6e6e6e;box-sizing:border-box;"></div>
<div class="a" style="left:180px;top:622px;width:153px;height:32px;background:#fbfbfb;border:1px solid #6e6e6e;box-sizing:border-box;"></div>
<div class="a" style="left:340px;top:622px;width:153px;height:32px;background:#fbfbfb;border:1px solid #6e6e6e;box-sizing:border-box;"></div>
<div class="t" style="top:597px;font-size:11.95px;line-height:11.95px;color:#000;left:68px;letter-spacing:0.1px">Conferido</div>
<div class="a" style="left:68px;top:607px;width:7px;height:1px;background:#000;"></div>
<div class="t" style="top:597px;font-size:11.95px;line-height:11.95px;color:#000;left:182.5px;">F8 - Pedido</div>
<div class="a" style="left:208px;top:607px;width:7px;height:1px;background:#000;"></div>
<div class="t" style="top:597px;font-size:11.95px;line-height:11.95px;color:#000;left:299px;letter-spacing:0.1px">F4 - Receber</div>
<div class="t" style="top:597px;font-size:11.95px;line-height:11.95px;color:#000;left:423px;letter-spacing:0.5px">Devol.Total</div>
<div class="a" style="left:423px;top:607px;width:8px;height:1px;background:#000;"></div>
<div class="t" style="top:635px;font-size:11.95px;line-height:11.95px;color:#000;left:67.3px;letter-spacing:0.13px">Imp. Conferência</div>
<div class="t" style="top:635px;font-size:11.95px;line-height:11.95px;color:#000;left:223.7px;letter-spacing:0.25px">F11 - Imp. Pedido</div>
<div class="a" style="left:256px;top:645px;width:4px;height:1px;background:#000;"></div>
<div class="t" style="top:635px;font-size:11.95px;line-height:11.95px;color:#000;left:391.5px;letter-spacing:0.23px">Imp. Devolução</div>
<svg class="a" style="left:39px;top:589px" width="19" height="23" viewBox="0 0 19 23">
<path d="M1 1 H11.6 L17.2 5.7 V21.9 H1 Z" fill="#ffffff" stroke="#787878" stroke-width="0.9"/>
<path d="M11.4 1 V7.1 H17.2" fill="none" stroke="#787878" stroke-width="0.9"/><path d="M3.6 4h5.5M3.6 6.1h5.5M3.6 9h6.6M3.6 11h5" stroke="#8c8c8c" stroke-width="0.8"/><path d="M13.1 14.1h1M12 16.1h2M10.3 18.1h3.8M3 18.1h1" stroke="#8c8c8c" stroke-width="0.8"/><path d="M4 13 L7.7 17.3 L14.2 8.3" fill="none" stroke="#1a6ee6" stroke-width="2.2" stroke-linecap="round" stroke-linejoin="round"/></svg>
<svg class="a" style="left:154px;top:589px" width="19" height="23" viewBox="0 0 19 23">
<path d="M1 1 H11.6 L17.2 5.7 V21.9 H1 Z" fill="#ffffff" stroke="#787878" stroke-width="0.9"/>
<path d="M11.4 1 V7.1 H17.2" fill="none" stroke="#787878" stroke-width="0.9"/><path d="M3.6 4h5.7M3.6 6.1h5.7M3.6 9.1h10.8M3.6 11.1h10.8M3.6 13.1h10.8M3.6 15.1h10.8M3.6 17.1h10.8M3.6 19.1h10.8" stroke="#8c8c8c" stroke-width="0.8"/></svg>
<svg class="a" style="left:260px;top:584px" width="40" height="32" viewBox="0 0 40 32">
<rect x="9.5" y="6.3" width="19" height="10.2" rx="0.8" fill="#ffffff" stroke="#4caf3f" stroke-width="1.8"/>
<path d="M10.4 7.2 h2.2 a2.2 2.2 0 0 1 -2.2 2.2z M27.6 7.2 v2.2 a2.2 2.2 0 0 1 -2.2 -2.2z M10.4 15.6 v-2.2 a2.2 2.2 0 0 1 2.2 2.2z M27.6 15.6 h-2.2 a2.2 2.2 0 0 1 2.2 -2.2z" fill="#4caf3f"/>
<circle cx="19" cy="10.8" r="2.9" fill="#4caf3f"/>
<rect x="19.3" y="13.3" width="10.6" height="7.6" fill="#efbd76"/>
<ellipse cx="24.6" cy="13.3" rx="5.3" ry="1.4" fill="#f2c98d"/>
<ellipse cx="24.6" cy="20.9" rx="5.3" ry="1.2" fill="#efbd76"/>
<path d="M19.3 15.6h10.6M19.3 18.2h10.6" stroke="#f8e2c0" stroke-width="0.8"/>
<rect x="12.3" y="20" width="10.7" height="6.2" fill="#efbd76"/>
<ellipse cx="17.65" cy="20" rx="5.35" ry="1.4" fill="#f2c98d"/>
<ellipse cx="17.65" cy="26.2" rx="5.35" ry="1.2" fill="#efbd76"/>
<path d="M12.3 22.3h10.7M12.3 24.6h10.7" stroke="#f8e2c0" stroke-width="0.8"/>
</svg>
<svg class="a" style="left:388px;top:586px" width="30" height="28" viewBox="0 0 30 28">
<path d="M8.3 6.6 L21.8 20.8 M21.8 6.6 L8.3 20.8" stroke="#ff1b1b" stroke-width="3.3" stroke-linecap="square"/>
</svg>
<svg class="a" style="left:30px;top:622px" width="36" height="32" viewBox="0 0 36 32">
<polygon points="6.5,11.1 9.7,11.1 9.7,16 24.1,16 24.1,11.1 27.6,11.1 28.1,11.6 28.1,20.1 27.6,20.6 6.5,20.6 6,20.1 6,11.6" fill="#7b7b7b"/>
<rect x="11.1" y="10.9" width="11.9" height="3.9" fill="#3d7cc9"/>
<rect x="12.6" y="6.5" width="8.7" height="5.6" fill="#ffffff" stroke="#7b7b7b" stroke-width="1"/>
<rect x="24.1" y="18.1" width="1.9" height="1.6" fill="#ffffff"/>
<rect x="12.7" y="19.3" width="8.6" height="4.8" fill="#ffffff" stroke="#7b7b7b" stroke-width="1"/>
<path d="M15.1 20.6h4M15.1 22.6h4" stroke="#3d7cc9" stroke-width="1"/>
</svg>
<svg class="a" style="left:186px;top:622px" width="36" height="32" viewBox="0 0 36 32">
<polygon points="6.5,11.1 9.7,11.1 9.7,16 24.1,16 24.1,11.1 27.6,11.1 28.1,11.6 28.1,20.1 27.6,20.6 6.5,20.6 6,20.1 6,11.6" fill="#7b7b7b"/>
<rect x="11.1" y="10.9" width="11.9" height="3.9" fill="#3d7cc9"/>
<rect x="12.6" y="6.5" width="8.7" height="5.6" fill="#ffffff" stroke="#7b7b7b" stroke-width="1"/>
<rect x="24.1" y="18.1" width="1.9" height="1.6" fill="#ffffff"/>
<rect x="12.7" y="19.3" width="8.6" height="4.8" fill="#ffffff" stroke="#7b7b7b" stroke-width="1"/>
<path d="M15.1 20.6h4M15.1 22.6h4" stroke="#3d7cc9" stroke-width="1"/>
</svg>
<svg class="a" style="left:354px;top:622px" width="36" height="32" viewBox="0 0 36 32">
<polygon points="6.5,11.1 9.7,11.1 9.7,16 24.1,16 24.1,11.1 27.6,11.1 28.1,11.6 28.1,20.1 27.6,20.6 6.5,20.6 6,20.1 6,11.6" fill="#7b7b7b"/>
<rect x="11.1" y="10.9" width="11.9" height="3.9" fill="#3d7cc9"/>
<rect x="12.6" y="6.5" width="8.7" height="5.6" fill="#ffffff" stroke="#7b7b7b" stroke-width="1"/>
<rect x="24.1" y="18.1" width="1.9" height="1.6" fill="#ffffff"/>
<rect x="12.7" y="19.3" width="8.6" height="4.8" fill="#ffffff" stroke="#7b7b7b" stroke-width="1"/>
<path d="M15.1 20.6h4M15.1 22.6h4" stroke="#3d7cc9" stroke-width="1"/>
</svg>
<div class="t" style="top:514px;font-size:12.95px;line-height:12.95px;color:#000;left:74px;width:600px;text-align:right;">Total Vendas</div>
<div class="a" style="left:686px;top:510px;width:117px;height:22px;background:#c0c0c0;border:1px solid #dcdcdc;box-sizing:border-box;"></div>
<div class="t" style="top:513px;font-size:14.2px;line-height:14.2px;color:#000000;font-weight:bold;left:200px;width:600px;text-align:right;">10.922,00</div>
<div class="t" style="top:542px;font-size:12.95px;line-height:12.95px;color:#000;left:73.60000000000002px;width:600px;text-align:right;">( - ) Vlr Devolução</div>
<div class="a" style="left:686px;top:539px;width:117px;height:22px;background:#ff8080;border:1px solid #dcdcdc;box-sizing:border-box;"></div>
<div class="t" style="top:542px;font-size:14.2px;line-height:14.2px;color:#ffffff;font-weight:bold;left:200px;width:600px;text-align:right;">0,00</div>
<div class="t" style="top:572px;font-size:12.95px;line-height:12.95px;color:#000;left:74.70000000000005px;width:600px;text-align:right;">( - ) Vlr Cancelado</div>
<div class="a" style="left:686px;top:568px;width:117px;height:22px;background:#ff0000;border:1px solid #dcdcdc;box-sizing:border-box;"></div>
<div class="t" style="top:571px;font-size:14.2px;line-height:14.2px;color:#ffffff;font-weight:bold;left:200px;width:600px;text-align:right;">0,00</div>
<div class="t" style="top:602px;font-size:12.95px;line-height:12.95px;color:#000;left:72.29999999999995px;width:600px;text-align:right;">( - ) Vlr Desconto</div>
<div class="a" style="left:686px;top:597px;width:117px;height:22px;background:#808080;border:1px solid #dcdcdc;box-sizing:border-box;"></div>
<div class="t" style="top:601px;font-size:14.2px;line-height:14.2px;color:#000000;font-weight:bold;left:200px;width:600px;text-align:right;">59,43</div>
<div class="t" style="top:631px;font-size:12.95px;line-height:12.95px;color:#000;left:72.29999999999995px;width:600px;text-align:right;">( = ) Vlr Líquido</div>
<div class="a" style="left:685px;top:626px;width:117px;height:22px;background:#00c000;border:1px solid #dcdcdc;box-sizing:border-box;"></div>
<div class="t" style="top:630px;font-size:14.2px;line-height:14.2px;color:#000000;font-weight:bold;left:200px;width:600px;text-align:right;">10.862,57</div>
<div class="t" style="top:665px;font-size:11.15px;line-height:11.15px;color:#000;left:16.7px;transform:scaleX(0.955);transform-origin:0 0;">PEDIDO : 9234 - Lançado por VIA AFV Alt:</div>
</body></html>
